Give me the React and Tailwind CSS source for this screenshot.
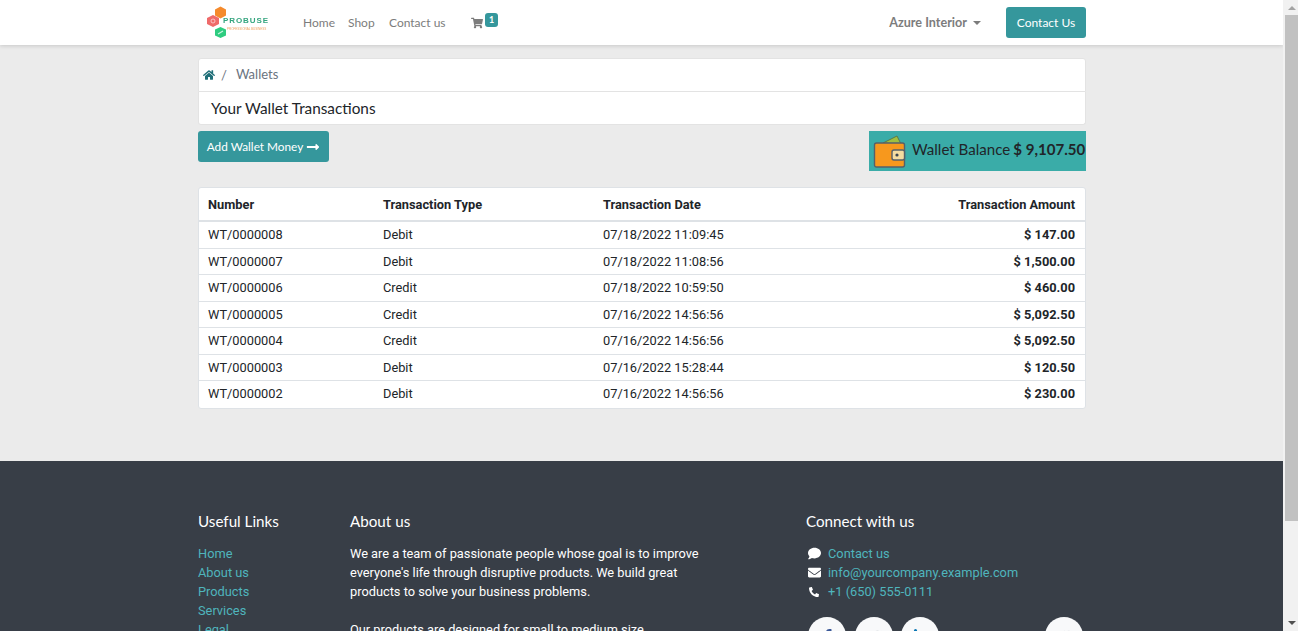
import React from "react";
import {
  FaHome,
  FaShoppingCart,
  FaComment,
  FaEnvelope,
  FaPhone,
  FaLongArrowAltRight,
  FaFacebookF,
  FaTwitter,
  FaLinkedinIn,
} from "react-icons/fa";

const rows = [
  ["WT/0000008", "Debit", "07/18/2022 11:09:45", "$ 147.00"],
  ["WT/0000007", "Debit", "07/18/2022 11:08:56", "$ 1,500.00"],
  ["WT/0000006", "Credit", "07/18/2022 10:59:50", "$ 460.00"],
  ["WT/0000005", "Credit", "07/16/2022 14:56:56", "$ 5,092.50"],
  ["WT/0000004", "Credit", "07/16/2022 14:56:56", "$ 5,092.50"],
  ["WT/0000003", "Debit", "07/16/2022 15:28:44", "$ 120.50"],
  ["WT/0000002", "Debit", "07/16/2022 14:56:56", "$ 230.00"],
];

const Logo = () => (
  <div className="relative w-[72px] h-[45px] shrink-0 blur-[0.5px]">
    <svg width="72" height="45" viewBox="0 0 72 45" className="absolute left-0 top-0">
      <polygon points="17,9.5 22.5,6.5 28,9.5 28,15.5 22.5,18.5 17,15.5" fill="#f58a2c" />
      <polygon points="9,18 15,15 21,18 21,24 15,27 9,24" fill="#ef6a6a" />
      <polygon points="17,29.5 22.5,27 28,29.5 28,35.5 22.5,38 17,35.5" fill="#2ecc80" />
      <circle cx="15" cy="21" r="2" fill="none" stroke="#ffd5d5" strokeWidth="0.8" />
      <path d="M20 34 L25 31" stroke="#c9f5df" strokeWidth="1.2" />
    </svg>
    <span className="absolute left-[25px] top-[16px] text-[8px] leading-[10px] font-bold tracking-[0.9px] text-[#35a57f] font-['Liberation_Sans',sans-serif]">
      PROBUSE
    </span>
    <span className="absolute left-[29px] top-[27px] text-[3px] leading-[4px] text-[#f0a060] whitespace-nowrap font-['Liberation_Sans',sans-serif]">
      PROFESSIONAL BUSINESS
    </span>
  </div>
);

const WalletIcon = () => (
  <svg width="34" height="34" viewBox="0 0 34 34" className="shrink-0">
    <polygon points="10,9 24,2 28,10" fill="#9fbf3f" stroke="#5a7a4a" strokeWidth="1" />
    <rect x="1.5" y="9" width="30" height="24" rx="2" fill="#f7981d" stroke="#55606a" strokeWidth="1.4" />
    <rect x="19" y="16" width="12.5" height="10" rx="2" fill="#f5dca0" stroke="#55606a" strokeWidth="1.4" />
    <circle cx="24" cy="21" r="1.6" fill="#3c4650" />
  </svg>
);

const Social = ({ children, className }) => (
  <div className={`w-[38px] h-[38px] rounded-full bg-[#f8f9fa] flex justify-center pt-[12px] text-[15px] ${className}`}>
    {children}
  </div>
);

const App = () => {
  return (
    <div className="h-[631px] flex overflow-hidden bg-[#ebebeb] text-[12.8px] leading-[19px] text-[#212529] font-['Roboto',sans-serif]">
      <div className="w-[1283px] shrink-0 flex flex-col h-[631px] overflow-hidden">
        {/* Header */}
        <header className="h-[45px] shrink-0 bg-white shadow-[0_1px_4px_rgba(0,0,0,0.15)] flex items-center pl-[198px] pr-[197px] font-['Lato',sans-serif] relative">
          <Logo />
          <nav className="flex items-center ml-[33px] text-[12px] text-[#7c7c7c]">
            <span className="w-[45px]">Home</span>
            <span className="w-[41px]">Shop</span>
            <span className="w-[82px]">Contact us</span>
          </nav>
          <div className="relative text-[#7c7c7c] text-[12px]">
            <FaShoppingCart />
            <span className="absolute left-[14px] top-[-4px] w-[13px] h-[14px] rounded-[3px] bg-[#35979c] text-white text-[9px] leading-[13px] font-bold text-center">
              1
            </span>
          </div>
          <div className="ml-auto flex items-center gap-[5px] text-[12.6px] font-bold text-[#7c7c7c]">
            <span>Azure Interior</span>
            <span className="w-0 h-0 ml-[1px] border-x-[4px] border-x-transparent border-t-[4px] border-t-[#7c7c7c]" />
          </div>
          <button className="ml-[25px] w-[80px] h-[31px] rounded-[3px] bg-[#35979c] text-white text-[12px]">
            Contact Us
          </button>
        </header>

        {/* Main */}
        <main className="shrink-0 h-[416px] pl-[198px] pr-[197px] pt-[13px]">
          <div className="bg-white rounded-t-[3px] border border-[#e3e3e3] h-[34px] flex items-center pl-[4px] text-[13px] text-[#6b7480] font-['Lato',sans-serif]">
            <FaHome className="text-[#1f6f78] text-[12px]" />
            <span className="ml-[6px]">/</span>
            <span className="ml-[9px] -translate-y-px">Wallets</span>
          </div>
          <div className="bg-white border border-[#e3e3e3] border-t-0 rounded-b-[3px] h-[33px] flex items-center pl-[12px] text-[15.3px] text-[#212529] font-['Lato',sans-serif]">
            Your Wallet Transactions
          </div>

          <div className="flex justify-between items-start mt-[6px]">
            <button className="h-[31px] w-[131px] rounded-[3px] bg-[#35979c] text-white text-[11.8px] flex items-center justify-center gap-[3px] font-['Lato',sans-serif]">
              Add Wallet Money <FaLongArrowAltRight className="text-[14px]" />
            </button>
            <div className="h-[40px] w-[217px] bg-[#3aaca8] flex items-center pl-[4px] text-[15.1px] whitespace-nowrap font-['Lato',sans-serif]">
              <WalletIcon />
              <span className="ml-[5px] mb-[4px]">Wallet Balance</span>
              <b className="ml-[3px] mb-[4px]">$ 9,107.50</b>
            </div>
          </div>

          {/* Table */}
          <div className="mt-[16px] bg-white border border-[#dee2e6] rounded-[3px] overflow-hidden">
            <div className="grid grid-cols-[175px_220px_1fr_220px] h-[34px] items-center border-b-2 border-[#dee2e6] pl-[9px] pr-[10px] font-bold">
              <span>Number</span>
              <span>Transaction Type</span>
              <span>Transaction Date</span>
              <span className="text-right">Transaction Amount</span>
            </div>
            {rows.map((row, index) => (
              <div
                key={index}
                className="grid grid-cols-[175px_220px_1fr_220px] h-[26.5px] items-center border-b last:border-b-0 last:pb-[1px] border-[#dee2e6] pl-[9px] pr-[10px]"
              >
                <span>{row[0]}</span>
                <span>{row[1]}</span>
                <span>{row[2]}</span>
                <span className="text-right font-bold">{row[3]}</span>
              </div>
            ))}
          </div>
        </main>

        {/* Footer */}
        <footer className="flex-1 bg-[#383e47] text-white pl-[198px] pr-[197px] pt-[48px] overflow-hidden">
          <div className="flex">
            <div className="w-[152px] shrink-0">
              <h5 className="text-[15.2px] leading-[24px] font-['Lato',sans-serif]">Useful Links</h5>
              <ul className="mt-[11px] text-[#4fb5bd]">
                <li>Home</li>
                <li>About us</li>
                <li>Products</li>
                <li>Services</li>
                <li>Legal</li>
              </ul>
            </div>
            <div className="w-[456px] shrink-0">
              <h5 className="text-[15.2px] leading-[24px] font-['Lato',sans-serif]">About us</h5>
              <p className="mt-[11px] w-[350px]">
                We are a team of passionate people whose goal is to improve everyone's life through disruptive products. We build great products to solve your business problems.
              </p>
              <p className="mt-[19px] w-[350px]">
                Our products are designed for small to medium size companies willing to optimize their performance.
              </p>
            </div>
            <div className="flex-1">
              <h5 className="text-[15.2px] leading-[24px] font-['Lato',sans-serif]">Connect with us</h5>
              <ul className="mt-[11px] text-[#4fb5bd]">
                <li className="flex items-center">
                  <span className="w-[22px] pl-[2px] text-white text-[13px]"><FaComment /></span>
                  Contact us
                </li>
                <li className="flex items-center">
                  <span className="w-[22px] pl-[2px] text-white text-[13px]"><FaEnvelope /></span>
                  info@yourcompany.example.com
                </li>
                <li className="flex items-center">
                  <span className="w-[22px] pl-[3px] text-white text-[10px]"><FaPhone className="-scale-x-100" /></span>
                  +1 (650) 555-0111
                </li>
              </ul>
              <div className="flex mt-[16px] ml-[2px]">
                <Social className="text-[#3b5998]"><FaFacebookF /></Social>
                <Social className="ml-[9px] text-[#d5d9de]"><FaTwitter /></Social>
                <Social className="ml-[8px] text-[#0976b4]"><FaLinkedinIn /></Social>
                <Social className="ml-[106px] text-[#d5d9de]"><FaHome /></Social>
              </div>
            </div>
          </div>
        </footer>
      </div>

      {/* Scrollbar */}
      <div className="w-[15px] shrink-0 bg-[#f1f1f1] flex flex-col items-center h-[631px]">
        <span className="mt-[6px] ml-[2px] w-0 h-0 border-x-[4px] border-x-transparent border-b-[4px] border-b-[#a3a3a3]" />
        <div className="mt-[5px] ml-[2px] w-[13px] h-[506px] bg-[#c1c1c1]" />
        <span className="mt-auto mb-[6px] ml-[2px] w-0 h-0 border-x-[4px] border-x-transparent border-t-[4px] border-t-[#505050]" />
      </div>
    </div>
  );
};

export default App;
